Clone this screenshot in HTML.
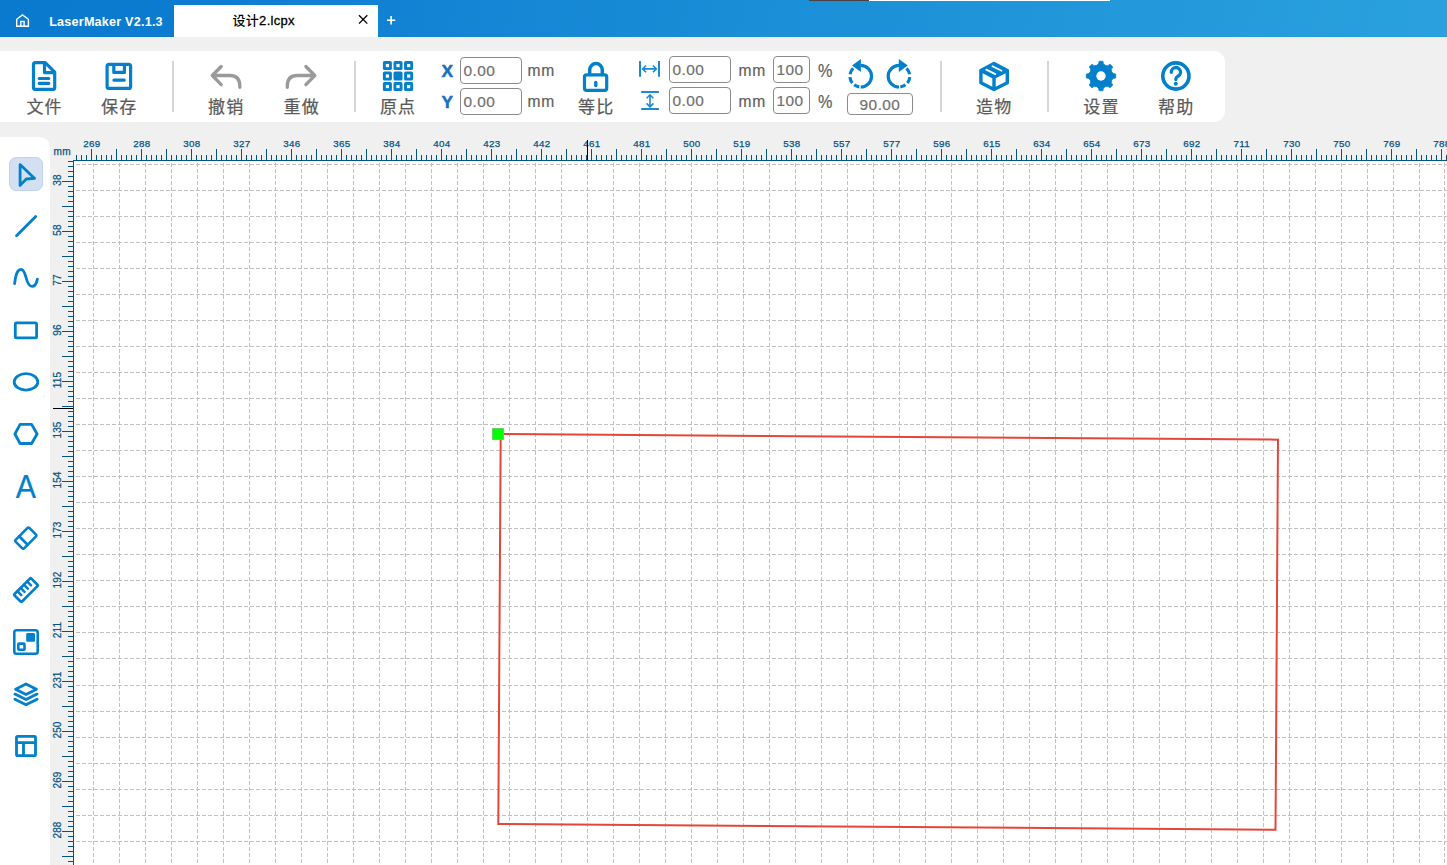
<!DOCTYPE html>
<html lang="zh-CN">
<head>
<meta charset="utf-8">
<title>LaserMaker V2.1.3</title>
<style>
*{box-sizing:border-box;margin:0;padding:0}
html,body{width:1447px;height:865px;overflow:hidden;background:#f0f0f0}
body{position:relative;font-family:"Liberation Sans","Noto Sans CJK SC",sans-serif;color:#5e5e5e}
.abs{position:absolute}
#titlebar{position:absolute;left:0;top:0;width:1447px;height:37px;background:linear-gradient(100deg,#0a7acf 0%,#0b7cd0 14%,#1283d3 28%,#1b8fd7 55%,#2aa1de 100%)}
#tab{position:absolute;left:174px;top:5px;width:204px;height:32px;background:#fff}
#tabtxt{position:absolute;left:232.5px;top:12.4px;font-size:13px;line-height:18px;color:#000;font-weight:500;letter-spacing:0.3px;white-space:nowrap;font-family:"Liberation Sans","Noto Sans CJK SC",sans-serif}
#apptitle{position:absolute;left:49.2px;top:12.6px;font-size:12.6px;line-height:18px;color:#fff;font-weight:700;white-space:nowrap;letter-spacing:0.22px}
#toolbar{position:absolute;left:0;top:51px;width:1225px;height:71px;background:#fff;border-radius:0 11px 11px 0}
#sidebar{position:absolute;left:0;top:137px;width:50px;height:728px;background:#fff;border-radius:0 10px 0 0}
#canvas{position:absolute;left:74px;top:161px;width:1373px;height:704px;background:#fff}
.sep{position:absolute;top:61px;width:2px;height:51px;background:#d6d6d6}
.tl{position:absolute;top:95.8px;width:60px;text-align:center;font-size:17px;line-height:24px;color:#5a5a5a;white-space:nowrap;letter-spacing:1.2px;text-indent:1.2px;font-weight:400;-webkit-text-stroke:0.22px #5a5a5a;font-family:"Liberation Sans","Noto Sans CJK SC",sans-serif}
.inp{position:absolute;border:1px solid #8a8a8a;border-radius:4px;background:#fff;font-size:15.4px;letter-spacing:0.45px;color:#707070;-webkit-text-stroke:0.2px #707070;line-height:25px;white-space:nowrap}
.unit{position:absolute;font-size:15.6px;line-height:20px;color:#606060;-webkit-text-stroke:0.2px #606060;white-space:nowrap;letter-spacing:0.7px}
.xy{position:absolute;font-size:17.3px;line-height:20px;font-weight:700;color:#196fc2;-webkit-text-stroke:0.5px #196fc2}
svg{position:absolute;left:0;top:0;overflow:visible}
.rl{font-family:"Liberation Sans",sans-serif;font-size:9.8px;fill:#045385;stroke:#045385;stroke-width:0.25px;letter-spacing:0.3px}
.rv{font-size:10px;letter-spacing:0.1px;stroke-width:0.22px}
.pc{font-size:18px;letter-spacing:0;transform:scaleX(0.9);transform-origin:0 0}
</style>
</head>
<body>

<div id="titlebar"></div>
<div class="abs" style="left:809px;top:0;width:60px;height:1px;background:#4a4242"></div>
<div class="abs" style="left:869px;top:0;width:241px;height:1px;background:#fff"></div>
<div id="tab"></div>
<div id="apptitle">LaserMaker V2.1.3</div>
<div id="tabtxt">设计<span style="-webkit-text-stroke:0.3px #000">2.lcpx</span></div>
<div id="toolbar"></div>
<div id="sidebar"></div>
<div id="canvas"></div>
<div class="sep" style="left:172px"></div>
<div class="sep" style="left:354px"></div>
<div class="sep" style="left:940px"></div>
<div class="sep" style="left:1047px"></div>
<div class="tl" style="left:14px">文件</div>
<div class="tl" style="left:88.7px">保存</div>
<div class="tl" style="left:195.6px">撤销</div>
<div class="tl" style="left:271.1px">重做</div>
<div class="tl" style="left:367.5px">原点</div>
<div class="tl" style="left:565.7px">等比</div>
<div class="tl" style="left:963.6px">造物</div>
<div class="tl" style="left:1070.8px">设置</div>
<div class="tl" style="left:1145.6px">帮助</div>
<div class="xy" style="left:441.6px;top:61px">X</div>
<div class="xy" style="left:441.6px;top:92px">Y</div>
<div class="inp" style="left:460px;top:57px;width:62px;height:27px;padding-left:2.6px">0.00</div>
<div class="inp" style="left:460px;top:88px;width:62px;height:27px;padding-left:2.6px">0.00</div>
<div class="unit" style="left:527.5px;top:61px">mm</div>
<div class="unit" style="left:527.5px;top:92px">mm</div>
<div class="inp" style="left:669px;top:56px;width:62px;height:27px;padding-left:2.6px">0.00</div>
<div class="inp" style="left:669px;top:87px;width:62px;height:27px;padding-left:2.6px">0.00</div>
<div class="unit" style="left:738.6px;top:61.4px">mm</div>
<div class="unit" style="left:738.6px;top:92.4px">mm</div>
<div class="inp" style="left:773px;top:56px;width:37px;height:27px;padding-left:2.6px">100</div>
<div class="inp" style="left:773px;top:87px;width:37px;height:27px;padding-left:2.6px">100</div>
<div class="unit pc" style="left:817.6px;top:60.6px">%</div>
<div class="unit pc" style="left:817.6px;top:91.6px">%</div>
<div class="inp" style="left:847px;top:93px;width:66px;height:22px;text-align:center;line-height:21px">90.00</div>
<svg width="1447" height="865" viewBox="0 0 1447 865">
<g stroke="#c0c0c0" stroke-width="1" stroke-dasharray="4 2" shape-rendering="crispEdges" fill="none">
<path d="M76 164.5H1447"/>
<path d="M76 190.5H1447"/>
<path d="M76 216.5H1447"/>
<path d="M76 242.5H1447"/>
<path d="M76 268.5H1447"/>
<path d="M76 294.5H1447"/>
<path d="M76 320.5H1447"/>
<path d="M76 346.5H1447"/>
<path d="M76 372.5H1447"/>
<path d="M76 398.5H1447"/>
<path d="M76 424.5H1447"/>
<path d="M76 450.5H1447"/>
<path d="M76 476.5H1447"/>
<path d="M76 502.5H1447"/>
<path d="M76 528.5H1447"/>
<path d="M76 554.5H1447"/>
<path d="M76 580.5H1447"/>
<path d="M76 606.5H1447"/>
<path d="M76 632.5H1447"/>
<path d="M76 658.5H1447"/>
<path d="M76 685.5H1447"/>
<path d="M76 711.5H1447"/>
<path d="M76 737.5H1447"/>
<path d="M76 763.5H1447"/>
<path d="M76 789.5H1447"/>
<path d="M76 815.5H1447"/>
<path d="M76 841.5H1447"/>
<path d="M93.5 163V865"/>
<path d="M119.5 163V865"/>
<path d="M145.5 163V865"/>
<path d="M171.5 163V865"/>
<path d="M197.5 163V865"/>
<path d="M223.5 163V865"/>
<path d="M249.5 163V865"/>
<path d="M275.5 163V865"/>
<path d="M301.5 163V865"/>
<path d="M327.5 163V865"/>
<path d="M353.5 163V865"/>
<path d="M379.5 163V865"/>
<path d="M405.5 163V865"/>
<path d="M431.5 163V865"/>
<path d="M457.5 163V865"/>
<path d="M483.5 163V865"/>
<path d="M509.5 163V865"/>
<path d="M535.5 163V865"/>
<path d="M561.5 163V865"/>
<path d="M587.5 163V865"/>
<path d="M613.5 163V865"/>
<path d="M639.5 163V865"/>
<path d="M665.5 163V865"/>
<path d="M691.5 163V865"/>
<path d="M717.5 163V865"/>
<path d="M743.5 163V865"/>
<path d="M769.5 163V865"/>
<path d="M795.5 163V865"/>
<path d="M821.5 163V865"/>
<path d="M847.5 163V865"/>
<path d="M873.5 163V865"/>
<path d="M899.5 163V865"/>
<path d="M925.5 163V865"/>
<path d="M951.5 163V865"/>
<path d="M977.5 163V865"/>
<path d="M1003.5 163V865"/>
<path d="M1029.5 163V865"/>
<path d="M1055.5 163V865"/>
<path d="M1081.5 163V865"/>
<path d="M1107.5 163V865"/>
<path d="M1133.5 163V865"/>
<path d="M1159.5 163V865"/>
<path d="M1185.5 163V865"/>
<path d="M1211.5 163V865"/>
<path d="M1237.5 163V865"/>
<path d="M1263.5 163V865"/>
<path d="M1289.5 163V865"/>
<path d="M1315.5 163V865"/>
<path d="M1341.5 163V865"/>
<path d="M1367.5 163V865"/>
<path d="M1393.5 163V865"/>
<path d="M1419.5 163V865"/>
<path d="M1444.5 163V865"/>
</g>
<g fill="#045385" shape-rendering="crispEdges">
<rect x="73" y="160" width="1374" height="1"/>
<rect x="73" y="160" width="1" height="705"/>
<path d="M76 155h1v5h-1zM81 155h1v5h-1zM86 155h1v5h-1zM91 149h1v11h-1zM96 155h1v5h-1zM101 155h1v5h-1zM106 155h1v5h-1zM111 155h1v5h-1zM116 149h1v11h-1zM121 155h1v5h-1zM126 155h1v5h-1zM131 155h1v5h-1zM136 155h1v5h-1zM141 149h1v11h-1zM146 155h1v5h-1zM151 155h1v5h-1zM156 155h1v5h-1zM161 155h1v5h-1zM166 149h1v11h-1zM171 155h1v5h-1zM176 155h1v5h-1zM181 155h1v5h-1zM186 155h1v5h-1zM191 149h1v11h-1zM196 155h1v5h-1zM201 155h1v5h-1zM206 155h1v5h-1zM211 155h1v5h-1zM216 149h1v11h-1zM221 155h1v5h-1zM226 155h1v5h-1zM231 155h1v5h-1zM236 155h1v5h-1zM241 149h1v11h-1zM246 155h1v5h-1zM251 155h1v5h-1zM256 155h1v5h-1zM261 155h1v5h-1zM266 149h1v11h-1zM271 155h1v5h-1zM276 155h1v5h-1zM281 155h1v5h-1zM286 155h1v5h-1zM291 149h1v11h-1zM296 155h1v5h-1zM301 155h1v5h-1zM306 155h1v5h-1zM311 155h1v5h-1zM316 149h1v11h-1zM321 155h1v5h-1zM326 155h1v5h-1zM331 155h1v5h-1zM336 155h1v5h-1zM341 149h1v11h-1zM346 155h1v5h-1zM351 155h1v5h-1zM356 155h1v5h-1zM361 155h1v5h-1zM366 149h1v11h-1zM371 155h1v5h-1zM376 155h1v5h-1zM381 155h1v5h-1zM386 155h1v5h-1zM391 149h1v11h-1zM396 155h1v5h-1zM401 155h1v5h-1zM406 155h1v5h-1zM411 155h1v5h-1zM416 149h1v11h-1zM421 155h1v5h-1zM426 155h1v5h-1zM431 155h1v5h-1zM436 155h1v5h-1zM441 149h1v11h-1zM446 155h1v5h-1zM451 155h1v5h-1zM456 155h1v5h-1zM461 155h1v5h-1zM466 149h1v11h-1zM471 155h1v5h-1zM476 155h1v5h-1zM481 155h1v5h-1zM486 155h1v5h-1zM491 149h1v11h-1zM496 155h1v5h-1zM501 155h1v5h-1zM506 155h1v5h-1zM511 155h1v5h-1zM516 149h1v11h-1zM521 155h1v5h-1zM526 155h1v5h-1zM531 155h1v5h-1zM536 155h1v5h-1zM541 149h1v11h-1zM546 155h1v5h-1zM551 155h1v5h-1zM556 155h1v5h-1zM561 155h1v5h-1zM566 149h1v11h-1zM571 155h1v5h-1zM576 155h1v5h-1zM581 155h1v5h-1zM586 155h1v5h-1zM591 149h1v11h-1zM596 155h1v5h-1zM601 155h1v5h-1zM606 155h1v5h-1zM611 155h1v5h-1zM616 149h1v11h-1zM621 155h1v5h-1zM626 155h1v5h-1zM631 155h1v5h-1zM636 155h1v5h-1zM641 149h1v11h-1zM646 155h1v5h-1zM651 155h1v5h-1zM656 155h1v5h-1zM661 155h1v5h-1zM666 149h1v11h-1zM671 155h1v5h-1zM676 155h1v5h-1zM681 155h1v5h-1zM686 155h1v5h-1zM691 149h1v11h-1zM696 155h1v5h-1zM701 155h1v5h-1zM706 155h1v5h-1zM711 155h1v5h-1zM716 149h1v11h-1zM721 155h1v5h-1zM726 155h1v5h-1zM731 155h1v5h-1zM736 155h1v5h-1zM741 149h1v11h-1zM746 155h1v5h-1zM751 155h1v5h-1zM756 155h1v5h-1zM761 155h1v5h-1zM766 149h1v11h-1zM771 155h1v5h-1zM776 155h1v5h-1zM781 155h1v5h-1zM786 155h1v5h-1zM791 149h1v11h-1zM796 155h1v5h-1zM801 155h1v5h-1zM806 155h1v5h-1zM811 155h1v5h-1zM816 149h1v11h-1zM821 155h1v5h-1zM826 155h1v5h-1zM831 155h1v5h-1zM836 155h1v5h-1zM841 149h1v11h-1zM846 155h1v5h-1zM851 155h1v5h-1zM856 155h1v5h-1zM861 155h1v5h-1zM866 149h1v11h-1zM871 155h1v5h-1zM876 155h1v5h-1zM881 155h1v5h-1zM886 155h1v5h-1zM891 149h1v11h-1zM896 155h1v5h-1zM901 155h1v5h-1zM906 155h1v5h-1zM911 155h1v5h-1zM916 149h1v11h-1zM921 155h1v5h-1zM926 155h1v5h-1zM931 155h1v5h-1zM936 155h1v5h-1zM941 149h1v11h-1zM946 155h1v5h-1zM951 155h1v5h-1zM956 155h1v5h-1zM961 155h1v5h-1zM966 149h1v11h-1zM971 155h1v5h-1zM976 155h1v5h-1zM981 155h1v5h-1zM986 155h1v5h-1zM991 149h1v11h-1zM996 155h1v5h-1zM1001 155h1v5h-1zM1006 155h1v5h-1zM1011 155h1v5h-1zM1016 149h1v11h-1zM1021 155h1v5h-1zM1026 155h1v5h-1zM1031 155h1v5h-1zM1036 155h1v5h-1zM1041 149h1v11h-1zM1046 155h1v5h-1zM1051 155h1v5h-1zM1056 155h1v5h-1zM1061 155h1v5h-1zM1066 149h1v11h-1zM1071 155h1v5h-1zM1076 155h1v5h-1zM1081 155h1v5h-1zM1086 155h1v5h-1zM1091 149h1v11h-1zM1096 155h1v5h-1zM1101 155h1v5h-1zM1106 155h1v5h-1zM1111 155h1v5h-1zM1116 149h1v11h-1zM1121 155h1v5h-1zM1126 155h1v5h-1zM1131 155h1v5h-1zM1136 155h1v5h-1zM1141 149h1v11h-1zM1146 155h1v5h-1zM1151 155h1v5h-1zM1156 155h1v5h-1zM1161 155h1v5h-1zM1166 149h1v11h-1zM1171 155h1v5h-1zM1176 155h1v5h-1zM1181 155h1v5h-1zM1186 155h1v5h-1zM1191 149h1v11h-1zM1196 155h1v5h-1zM1201 155h1v5h-1zM1206 155h1v5h-1zM1211 155h1v5h-1zM1216 149h1v11h-1zM1221 155h1v5h-1zM1226 155h1v5h-1zM1231 155h1v5h-1zM1236 155h1v5h-1zM1241 149h1v11h-1zM1246 155h1v5h-1zM1251 155h1v5h-1zM1256 155h1v5h-1zM1261 155h1v5h-1zM1266 149h1v11h-1zM1271 155h1v5h-1zM1276 155h1v5h-1zM1281 155h1v5h-1zM1286 155h1v5h-1zM1291 149h1v11h-1zM1296 155h1v5h-1zM1301 155h1v5h-1zM1306 155h1v5h-1zM1311 155h1v5h-1zM1316 149h1v11h-1zM1321 155h1v5h-1zM1326 155h1v5h-1zM1331 155h1v5h-1zM1336 155h1v5h-1zM1341 149h1v11h-1zM1346 155h1v5h-1zM1351 155h1v5h-1zM1356 155h1v5h-1zM1361 155h1v5h-1zM1366 149h1v11h-1zM1371 155h1v5h-1zM1376 155h1v5h-1zM1381 155h1v5h-1zM1386 155h1v5h-1zM1391 149h1v11h-1zM1396 155h1v5h-1zM1401 155h1v5h-1zM1406 155h1v5h-1zM1411 155h1v5h-1zM1416 149h1v11h-1zM1421 155h1v5h-1zM1426 155h1v5h-1zM1431 155h1v5h-1zM1436 155h1v5h-1zM1441 149h1v11h-1zM1446 155h1v5h-1zM68 161h5v1h-5zM68 166h5v1h-5zM68 171h5v1h-5zM68 176h5v1h-5zM62 181h11v1h-11zM68 186h5v1h-5zM68 191h5v1h-5zM68 196h5v1h-5zM68 201h5v1h-5zM62 206h11v1h-11zM68 211h5v1h-5zM68 216h5v1h-5zM68 221h5v1h-5zM68 226h5v1h-5zM62 231h11v1h-11zM68 236h5v1h-5zM68 241h5v1h-5zM68 246h5v1h-5zM68 251h5v1h-5zM62 256h11v1h-11zM68 261h5v1h-5zM68 266h5v1h-5zM68 271h5v1h-5zM68 276h5v1h-5zM62 281h11v1h-11zM68 286h5v1h-5zM68 291h5v1h-5zM68 296h5v1h-5zM68 301h5v1h-5zM62 306h11v1h-11zM68 311h5v1h-5zM68 316h5v1h-5zM68 321h5v1h-5zM68 326h5v1h-5zM62 331h11v1h-11zM68 336h5v1h-5zM68 341h5v1h-5zM68 346h5v1h-5zM68 351h5v1h-5zM62 356h11v1h-11zM68 361h5v1h-5zM68 366h5v1h-5zM68 371h5v1h-5zM68 376h5v1h-5zM62 381h11v1h-11zM68 386h5v1h-5zM68 391h5v1h-5zM68 396h5v1h-5zM68 401h5v1h-5zM62 406h11v1h-11zM68 411h5v1h-5zM68 416h5v1h-5zM68 421h5v1h-5zM68 426h5v1h-5zM62 431h11v1h-11zM68 436h5v1h-5zM68 441h5v1h-5zM68 446h5v1h-5zM68 451h5v1h-5zM62 456h11v1h-11zM68 461h5v1h-5zM68 466h5v1h-5zM68 471h5v1h-5zM68 476h5v1h-5zM62 481h11v1h-11zM68 486h5v1h-5zM68 491h5v1h-5zM68 496h5v1h-5zM68 501h5v1h-5zM62 506h11v1h-11zM68 511h5v1h-5zM68 516h5v1h-5zM68 521h5v1h-5zM68 526h5v1h-5zM62 531h11v1h-11zM68 536h5v1h-5zM68 541h5v1h-5zM68 546h5v1h-5zM68 551h5v1h-5zM62 556h11v1h-11zM68 561h5v1h-5zM68 566h5v1h-5zM68 571h5v1h-5zM68 576h5v1h-5zM62 581h11v1h-11zM68 586h5v1h-5zM68 591h5v1h-5zM68 596h5v1h-5zM68 601h5v1h-5zM62 606h11v1h-11zM68 611h5v1h-5zM68 616h5v1h-5zM68 621h5v1h-5zM68 626h5v1h-5zM62 631h11v1h-11zM68 636h5v1h-5zM68 641h5v1h-5zM68 646h5v1h-5zM68 651h5v1h-5zM62 656h11v1h-11zM68 661h5v1h-5zM68 666h5v1h-5zM68 671h5v1h-5zM68 676h5v1h-5zM62 681h11v1h-11zM68 686h5v1h-5zM68 691h5v1h-5zM68 696h5v1h-5zM68 701h5v1h-5zM62 706h11v1h-11zM68 711h5v1h-5zM68 716h5v1h-5zM68 721h5v1h-5zM68 726h5v1h-5zM62 731h11v1h-11zM68 736h5v1h-5zM68 741h5v1h-5zM68 746h5v1h-5zM68 751h5v1h-5zM62 756h11v1h-11zM68 761h5v1h-5zM68 766h5v1h-5zM68 771h5v1h-5zM68 776h5v1h-5zM62 781h11v1h-11zM68 786h5v1h-5zM68 791h5v1h-5zM68 796h5v1h-5zM68 801h5v1h-5zM62 806h11v1h-11zM68 811h5v1h-5zM68 816h5v1h-5zM68 821h5v1h-5zM68 826h5v1h-5zM62 831h11v1h-11zM68 836h5v1h-5zM68 841h5v1h-5zM68 846h5v1h-5zM68 851h5v1h-5zM62 856h11v1h-11zM68 861h5v1h-5z"/>
</g>
<g class="rl" text-anchor="middle">
<text x="91.8" y="146.5">269</text>
<text x="141.8" y="146.5">288</text>
<text x="191.8" y="146.5">308</text>
<text x="241.8" y="146.5">327</text>
<text x="291.8" y="146.5">346</text>
<text x="341.8" y="146.5">365</text>
<text x="391.8" y="146.5">384</text>
<text x="441.8" y="146.5">404</text>
<text x="491.8" y="146.5">423</text>
<text x="541.8" y="146.5">442</text>
<text x="591.8" y="146.5">461</text>
<text x="641.8" y="146.5">481</text>
<text x="691.8" y="146.5">500</text>
<text x="741.8" y="146.5">519</text>
<text x="791.8" y="146.5">538</text>
<text x="841.8" y="146.5">557</text>
<text x="891.8" y="146.5">577</text>
<text x="941.8" y="146.5">596</text>
<text x="991.8" y="146.5">615</text>
<text x="1041.8" y="146.5">634</text>
<text x="1091.8" y="146.5">654</text>
<text x="1141.8" y="146.5">673</text>
<text x="1191.8" y="146.5">692</text>
<text x="1241.8" y="146.5">711</text>
<text x="1291.8" y="146.5">730</text>
<text x="1341.8" y="146.5">750</text>
<text x="1391.8" y="146.5">769</text>
<text x="1441.8" y="146.5">788</text>
<text class="rv" transform="translate(60.9 180.0) rotate(-90)">38</text>
<text class="rv" transform="translate(60.9 230.0) rotate(-90)">58</text>
<text class="rv" transform="translate(60.9 280.0) rotate(-90)">77</text>
<text class="rv" transform="translate(60.9 330.0) rotate(-90)">96</text>
<text class="rv" transform="translate(60.9 380.0) rotate(-90)">115</text>
<text class="rv" transform="translate(60.9 430.0) rotate(-90)">135</text>
<text class="rv" transform="translate(60.9 480.0) rotate(-90)">154</text>
<text class="rv" transform="translate(60.9 530.0) rotate(-90)">173</text>
<text class="rv" transform="translate(60.9 580.0) rotate(-90)">192</text>
<text class="rv" transform="translate(60.9 630.0) rotate(-90)">211</text>
<text class="rv" transform="translate(60.9 680.0) rotate(-90)">231</text>
<text class="rv" transform="translate(60.9 730.0) rotate(-90)">250</text>
<text class="rv" transform="translate(60.9 780.0) rotate(-90)">269</text>
<text class="rv" transform="translate(60.9 830.0) rotate(-90)">288</text>
</g>
<text class="rl" x="53.6" y="154.8" style="font-size:10.1px">mm</text>
<rect x="587" y="140" width="1" height="20" fill="#000" shape-rendering="crispEdges"/>
<rect x="53" y="408" width="20" height="1" fill="#000" shape-rendering="crispEdges"/>
<path d="M500.7 434L1278 439.65L1275.5 829.8L498.3 823.9Z" fill="none" stroke="#e4463a" stroke-width="2" stroke-linejoin="miter"/>
<rect x="492" y="428" width="12" height="12" fill="#a0b4a0"/><rect x="492.6" y="428.6" width="10.8" height="10.8" fill="#00ff00"/>
<g fill="none" stroke="#fff" stroke-width="1.4" stroke-linejoin="miter">
<path d="M16.7 26.2V19.3L22.5 14.9L28.4 19.3V26.2Z"/>
<path d="M20.8 26.2V21.5H24.1V26.2"/>
</g>
<path d="M359 15.3L367.3 23.6M367.3 15.3L359 23.6" stroke="#000" stroke-width="1.3" fill="none"/>
<path d="M387 20.2H395.3M391.15 16V24.5" stroke="#fff" stroke-width="1.6" fill="none"/>
<g fill="none" stroke="#0280cc" stroke-width="3.2" stroke-linejoin="round" stroke-linecap="round">
<path d="M45.2 62.7H35.5Q33.5 62.7 33.5 64.7V87.4Q33.5 89.4 35.5 89.4H52.7Q54.7 89.4 54.7 87.4V72.2L45.2 62.7M44.5 62.9V72.6H54.5"/>
<path d="M39.2 78.5H48.8M39.2 83.3H48.8"/>
<rect x="107.1" y="64.3" width="23.5" height="24.1" rx="2"/>
<path d="M113.8 64.5V72.4H124.4V64.5M114 80.2H124.2"/>
<rect x="584.5" y="74.8" width="22.2" height="15.5" rx="2"/>
<path d="M589.7 74.5V69.9A6.3 6.3 0 0 1 602.3 69.9V74.5" stroke-width="3.5"/>
<path d="M595.8 82.5V85.5" stroke-width="3.4"/>
</g>
<g fill="none" stroke="#9a9a9a" stroke-width="3.3" stroke-linejoin="round" stroke-linecap="round">
<path d="M221.2 66.5L212.3 75.5L221.2 84.6M212.5 75.5H229.8Q239.8 75.5 239.8 85.8V87.3"/>
<path d="M305.9 66.5L314.8 75.5L305.9 84.6M314.6 75.5H297.3Q287.3 75.5 287.3 85.8V87.3"/>
</g>
<g fill="#0280cc">
<rect x="382.9" y="61.1" width="9" height="8.9" rx="1.6"/>
<rect x="393.5" y="61.1" width="9" height="8.9" rx="1.6"/>
<rect x="404.1" y="61.1" width="9" height="8.9" rx="1.6"/>
<rect x="382.9" y="71.6" width="9" height="8.9" rx="1.6"/>
<rect x="393.5" y="71.6" width="9" height="8.9" rx="1.6"/>
<rect x="404.1" y="71.6" width="9" height="8.9" rx="1.6"/>
<rect x="382.9" y="82.1" width="9" height="8.9" rx="1.6"/>
<rect x="393.5" y="82.1" width="9" height="8.9" rx="1.6"/>
<rect x="404.1" y="82.1" width="9" height="8.9" rx="1.6"/>
</g><g fill="#fff">
<rect x="385.79999999999995" y="63.95" width="3.2" height="3.2"/>
<rect x="396.4" y="63.95" width="3.2" height="3.2"/>
<rect x="407.0" y="63.95" width="3.2" height="3.2"/>
<rect x="385.79999999999995" y="74.44999999999999" width="3.2" height="3.2"/>
<rect x="407.0" y="74.44999999999999" width="3.2" height="3.2"/>
<rect x="385.79999999999995" y="84.94999999999999" width="3.2" height="3.2"/>
<rect x="396.4" y="84.94999999999999" width="3.2" height="3.2"/>
<rect x="407.0" y="84.94999999999999" width="3.2" height="3.2"/>
</g>
<g fill="none" stroke="#1b89d3" stroke-width="1.6">
<path d="M640 61V76.8M659 61V76.8" stroke-width="2"/>
<path d="M642.6 68.9H656.4M646 65.5L642.6 68.9L646 72.3M653 65.5L656.4 68.9L653 72.3"/>
<path d="M641.2 92H658.9M641.2 109H658.9" stroke-width="2"/>
<path d="M650 94.8V106.8M646.6 98.2L650 94.8L653.4 98.2M646.6 103.4L650 106.8L653.4 103.4"/>
</g>
<g fill="none" stroke="#0280cc" stroke-width="3.2">
<path d="M860.70 65.40A10.8 10.8 0 0 1 860.70 87.00"/>
<path d="M859.38 86.92A10.8 10.8 0 0 1 854.20 84.83"/>
<path d="M852.31 83.00A10.8 10.8 0 0 1 849.94 77.14"/>
<path d="M850.06 74.32A10.8 10.8 0 0 1 853.20 68.43"/>
<path d="M899.00 65.40A10.8 10.8 0 0 0 899.00 87.00"/>
<path d="M900.32 86.92A10.8 10.8 0 0 0 905.50 84.83"/>
<path d="M907.39 83.00A10.8 10.8 0 0 0 909.76 77.14"/>
<path d="M909.64 74.32A10.8 10.8 0 0 0 906.50 68.43"/>
</g>
<path d="M860.9 58.9V72L852 65.4Z" fill="#0280cc"/>
<path d="M898.8 58.9V72L907.8 65.4Z" fill="#0280cc"/>
<path d="M994 63.5L1007.3 70.4L994 77.2L980.9 70.4Z" fill="#0280cc"/>
<path d="M994 63.5L1007.3 70.4V82.7L994 89.5L980.9 82.7V70.4ZM980.9 70.4L994 77.2L1007.3 70.4M994 77.2V89.5" fill="none" stroke="#0280cc" stroke-width="3.4" stroke-linejoin="round"/>
<path d="M986.3 69.6L995.3 74.1M992.5 66.2L1001.5 70.7" stroke="#fff" stroke-width="1.8" stroke-linecap="round" fill="none"/>
<path d="M1098.97 61.34A14.8 14.8 0 0 1 1103.03 61.34A3.9 3.9 0 0 0 1109.93 64.20A14.8 14.8 0 0 1 1112.80 67.07A3.9 3.9 0 0 0 1115.66 73.97A14.8 14.8 0 0 1 1115.66 78.03A3.9 3.9 0 0 0 1112.80 84.93A14.8 14.8 0 0 1 1109.93 87.80A3.9 3.9 0 0 0 1103.03 90.66A14.8 14.8 0 0 1 1098.97 90.66A3.9 3.9 0 0 0 1092.07 87.80A14.8 14.8 0 0 1 1089.20 84.93A3.9 3.9 0 0 0 1086.34 78.03A14.8 14.8 0 0 1 1086.34 73.97A3.9 3.9 0 0 0 1089.20 67.07A14.8 14.8 0 0 1 1092.07 64.20A3.9 3.9 0 0 0 1098.97 61.34Z" fill="#0280cc" stroke="#0280cc" stroke-width="0.7" stroke-linejoin="round"/>
<circle cx="1101" cy="76" r="4.7" fill="#fff"/>
<circle cx="1175.9" cy="76" r="13.1" fill="none" stroke="#0280cc" stroke-width="3.6"/>
<path d="M1171.3 72.3A4.6 4.6 0 1 1 1177.6 76.4Q1175.8 77.4 1175.8 79.6" fill="none" stroke="#0280cc" stroke-width="3.3" stroke-linecap="round"/>
<circle cx="1175.8" cy="83.7" r="2" fill="#0280cc"/>
<rect x="9.5" y="157.5" width="33" height="33" rx="6.5" fill="#d3e0f2" stroke="#c2d3ea" stroke-width="1"/>
<g fill="none" stroke="#0280cc" stroke-width="2.8" stroke-linejoin="round" stroke-linecap="round">
<path d="M20.1 164.6L34.6 178.4L26.3 179L20.1 185.4Z"/>
<path d="M16.5 235.7L35.7 216.5"/>
<path d="M14.6 283.6C16.2 270 19 269.4 21 269.4C24 269.4 25 274 26.2 278C27.5 283 29 286.4 32 286.4C35 286.4 36.6 283 37.4 279.1"/>
<rect x="15.3" y="322.9" width="21.3" height="15" rx="1"/>
<ellipse cx="26" cy="381.9" rx="11.8" ry="8.2"/>
<path d="M14.9 434L20.1 424.4H31.6L37.1 434L31.6 443.5H20.1Z"/>
<g transform="translate(25.8 538.1) rotate(-45)"><rect x="-9.7" y="-6" width="19.4" height="12" rx="1.6" stroke-width="2.6"/><path d="M-3.4 -6V6" stroke-width="2.6"/></g>
<g transform="translate(26 590.1) rotate(-45)"><rect x="-11.9" y="-5.3" width="23.8" height="10.6" rx="1" stroke-width="2.7"/><path d="M-6.9 -5.3V0.2M-2.3 -5.3V0.2M2.3 -5.3V0.2M6.9 -5.3V0.2" stroke-width="2.5"/></g>
<rect x="14.3" y="630.3" width="23.4" height="23.4" rx="2.2" stroke-width="2.6"/>
<rect x="18.3" y="643.6" width="6.2" height="6.1" rx="0.8" stroke-width="2.6"/>
<path d="M26 683.9L36.4 689.3L26 694.5L15.6 689.3Z"/>
<path d="M14.9 694.1L26 699.6L37.1 694.1M14.9 699.2L26 704.7L37.1 699.2"/>
<rect x="16.5" y="736.4" width="19" height="19.3" rx="1.2"/>
<path d="M16.5 742.6H35.5M23.5 742.6V755.7"/>
</g>
<rect x="26.2" y="633" width="8.8" height="8.8" rx="1.4" fill="#0280cc"/>
<text transform="translate(25.9 497.95) scale(0.93 1)" text-anchor="middle" font-family="Liberation Sans, sans-serif" font-size="32.6" fill="#0280cc" stroke="#0280cc" stroke-width="0.25" stroke-linejoin="round">A</text>
</svg>
</body></html>
